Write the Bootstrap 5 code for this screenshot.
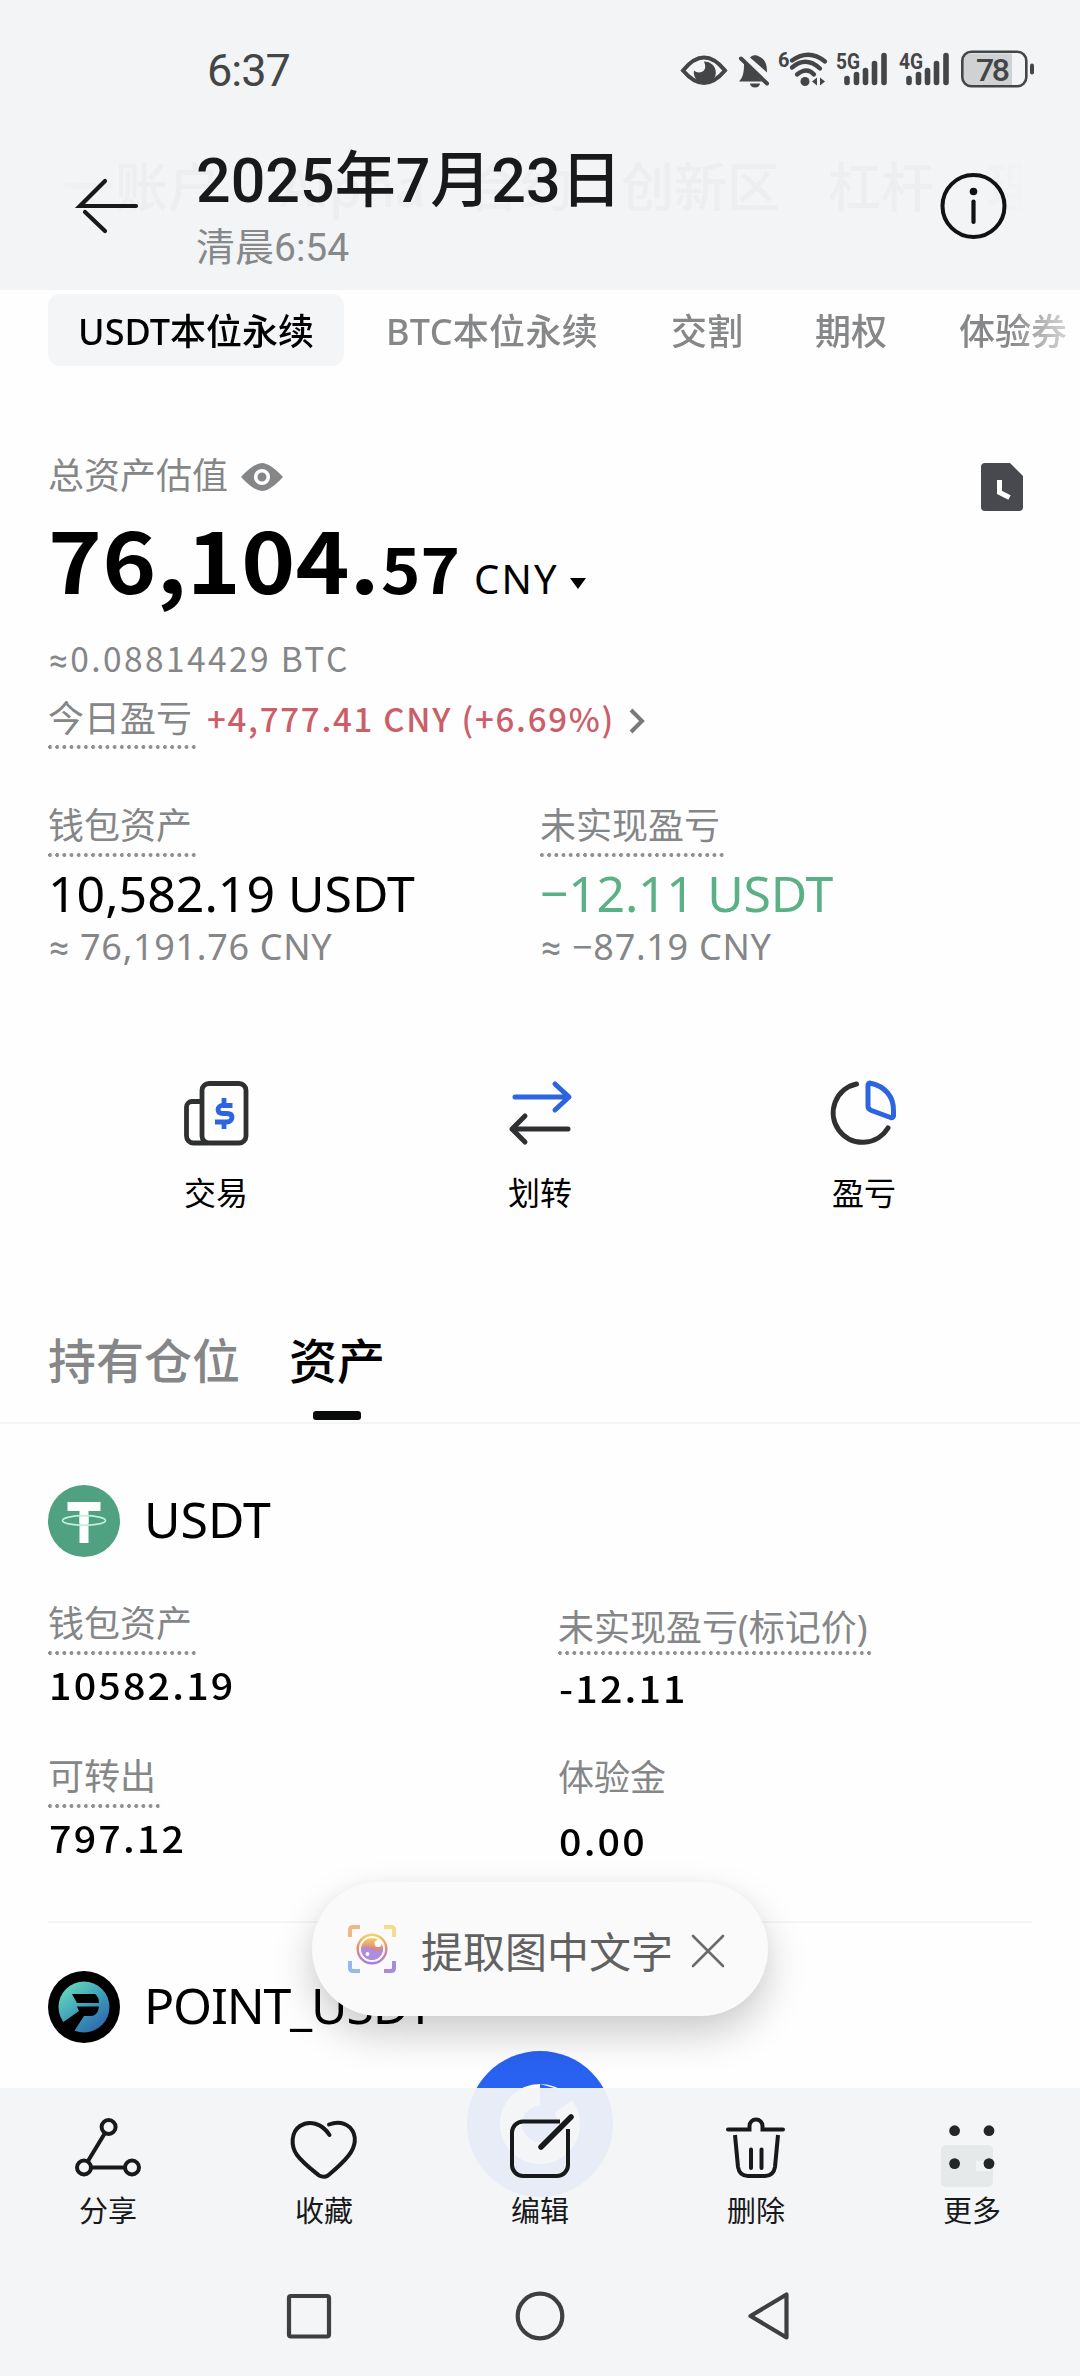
<!DOCTYPE html>
<html lang="zh-CN">
<head>
<meta charset="utf-8">
<meta name="viewport" content="width=device-width, initial-scale=1">
<title>2025年7月23日</title>
<link rel="stylesheet" href="https://cdn.jsdelivr.net/npm/bootstrap@5.3.0/dist/css/bootstrap.min.css">
<script src="https://cdn.jsdelivr.net/npm/bootstrap@5.3.0/dist/js/bootstrap.bundle.min.js"></script>
<style>
body{font-family:"Noto Sans","Noto Sans CJK SC",sans-serif;color:#000;background:#fdfdfd}
svg{display:block;flex:none;overflow:visible}
.phone{width:1080px;height:2376px;background:#fefefe}
.top-area{height:290px;background:#f3f4f6}
.status{height:134px;padding:4px 44px 0 207px;color:#444546;font-family:Roboto,sans-serif}
.clock-time{font-size:45px;letter-spacing:-1px;line-height:60px;padding-top:4px}
.title-row{height:156px;padding:0 74px 0 77px}
.page-title{font-family:Roboto,"Noto Sans CJK SC",sans-serif;font-weight:500;font-size:61px;line-height:76px;color:#17191b;letter-spacing:0;margin-top:9px}
.page-sub{font-family:Roboto,"Noto Sans CJK SC",sans-serif;font-size:39px;line-height:44px;color:#86888a;margin-top:7px}
.ghost{left:62px;top:150px;width:960px;height:74px;font-size:53px;line-height:74px;font-weight:500;color:#edeef0;white-space:nowrap;-webkit-mask-image:linear-gradient(90deg,rgba(0,0,0,.4),#000 8%,#000 92%,rgba(0,0,0,.2))}
.ghost span{flex:none}
.market-tabs{height:76px;padding:4px 0 0 48px;font-size:36px;font-weight:500;line-height:75px;color:#868789;white-space:nowrap;-webkit-mask-image:linear-gradient(90deg,#000 1010px,rgba(0,0,0,.35) 1066px)}
.market-tabs .on{width:296px;height:72px;border-radius:12px;background:#f4f5f7;color:#000}
.pad{padding-left:48px;padding-right:48px}
.soft{color:#858688}
.lab{font-size:36px;line-height:40px;color:#858688}
.dots{height:51px;display:inline-block;background:radial-gradient(circle at 2px 2px,#8f9092 1.7px,transparent 2.2px) 0 100%/7.2px 4px repeat-x}
.num{font-family:"Noto Sans CJK SC",sans-serif}
.aeq{font-family:Roboto,"Liberation Sans",sans-serif;line-height:1}
.amount{height:120px;line-height:120px;padding-top:2px}
.amount .big{font-weight:700;font-size:84px;transform:scaleX(1.09);transform-origin:0 50%;flex:none;width:333px;letter-spacing:.3px}
.amount .dec{font-weight:700;font-size:62px;transform:scaleX(1.08);transform-origin:0 50%;flex:none;width:93px}
.unit{font-size:40px;letter-spacing:2.2px}
.btc{font-size:33.5px;line-height:40px;height:40px;letter-spacing:2.4px;padding-left:1px}
.gain{font-size:33px;font-weight:500;line-height:40px;letter-spacing:1.75px;color:#cb5e69;margin-left:10px;margin-top:-1px;white-space:nowrap}
.val{font-size:50px;line-height:52px;white-space:nowrap;letter-spacing:0}
.approx{font-size:36px;line-height:40px;height:40px;margin-top:8px;letter-spacing:.7px;padding-left:1px}
.act{font-size:32px;line-height:40px;margin-top:27px}
.tabs2{font-size:48px;line-height:60px;font-weight:500}
.bar-mark{width:48px;height:9px;border-radius:3px;background:#090a0a;margin-top:20px}
.hair{height:2px;background:#f5f5f6}
.coin{height:72px}
.coin span{font-size:50px;line-height:69px;margin-left:24px}
.dval{font-size:36.5px;font-weight:500;line-height:40px;letter-spacing:2px;transform:scaleX(1.08);transform-origin:0 50%;padding-left:1px}
.half{width:510px;height:104px;flex:none}
.toast-pill{left:312px;top:1882px;width:456px;height:134px;border-radius:67px;background:#fafafa;box-shadow:0 18px 40px rgba(0,0,0,.2),0 0 14px rgba(0,0,0,.025);padding-left:36px;z-index:3;color:#616161;font-size:42px}
.fab{left:467px;top:2051px;z-index:2}
.dock{left:0;top:2088px;width:1080px;height:288px;z-index:4;background:rgba(243,244,246,.945);font-size:29px;color:#17191a}
.dock .cell{width:216px;padding-top:26px}
.dock .cell span{line-height:36px;margin-top:13px}
</style>
</head>
<body>
<div class="phone position-relative overflow-hidden mx-auto">
  <header class="top-area position-relative">
    <div class="ghost position-absolute d-flex"><span style="width:53px">一</span><span style="width:165px">账户</span><span style="width:187px">Alpha</span><span style="width:154px">合约</span><span style="width:207px">创新区</span><span style="width:158px">杠杆</span><span>理</span></div>
    <div class="status d-flex justify-content-between align-items-center">
      <span class="clock-time">6:37</span>
      <svg width="360" height="60" viewBox="675 38.500 360 60" fill="#444546">
        <path d="M682 70Q703 44 724 70Q703 95 682 70Z" fill="none" stroke="#444546" stroke-width="4"/>
        <path d="M703 61a11 11 0 1 1-10 9c4 4 15 2 10-9Z"/>
        <path d="M749 57a6 5 0 0 1 9-1c7 3 8 9 8 16ZM743 62l18 19H738c5-5 5-12 5-19Z"/><path d="M740 58l26 25" stroke="#444546" stroke-width="4" stroke-linecap="round"/><path d="M749 83h10a5 4 0 0 1-10 0Z"/>
        <text x="777" y="66" font-size="20" font-weight="700" font-family="Roboto">6</text>
        <g fill="none" stroke="#444546" stroke-width="4.3" stroke-linecap="round"><path d="M791 60q17-12 33 1M791 67q14-12 28 1M796 74q10-8 17 0"/></g>
        <circle cx="804" cy="81" r="4.5"/><path d="M811 81l5-4v8ZM824 81l-5-4v8Z"/>
        <text x="835" y="68" font-size="22" font-weight="700" font-family="Roboto" textLength="24" lengthAdjust="spacingAndGlyphs">5G</text>
        <text x="898" y="68" font-size="22" font-weight="700" font-family="Roboto" textLength="24" lengthAdjust="spacingAndGlyphs">4G</text>
        <g stroke="#444546" stroke-width="5.6" stroke-linecap="round"><path d="M846 78v4M855.500 74v8M864.500 70v12M873.500 63v19M883 55v27M908 78v4M917.500 74v8M926.500 70v12M935.500 63v19M945 55v27"/></g>
        <path d="M970 53h41v32h-41a8 8 0 0 1-8-8V61a8 8 0 0 1 8-8Z" fill="#d0d1d2"/>
        <rect x="961.300" y="51.300" width="64" height="34.500" rx="9" fill="none" stroke="#444546" stroke-width="2.600"/>
        <rect x="1029" y="63" width="4" height="11" rx="2"/>
        <text x="975" y="80" font-size="32" font-weight="500" font-family="Roboto" textLength="34">78</text>
      </svg>
    </div>
    <div class="title-row d-flex position-relative">
      <svg width="62" height="144" viewBox="77 134 62 144" fill="none" stroke="#17191b" stroke-width="4.200" stroke-linecap="round"><path d="M136 206H80L105 181M85 212l20 19"/></svg>
      <div class="flex-grow-1" style="margin-left:57px">
        <div class="page-title">2025年7月23日</div>
        <div class="page-sub">清晨6:54</div>
      </div>
      <svg width="66" height="144" viewBox="938.500 134 66 144"><circle cx="972" cy="206" r="31" fill="none" stroke="#101214" stroke-width="4"/><circle cx="972" cy="191.500" r="3.800" fill="#101214"/><path d="M972 201.500v20.500" stroke="#101214" stroke-width="4.200" stroke-linecap="round"/></svg>
    </div>
  </header>

  <nav class="market-tabs d-flex">
    <div class="on text-center">USDT本位永续</div>
    <div style="margin-left:42px;width:285px;letter-spacing:.3px">BTC本位永续</div>
    <div style="width:144px">交割</div>
    <div style="width:144px">期权</div>
    <div>体验券</div>
  </nav>

  <section class="pad">
    <div class="d-flex justify-content-between align-items-start" style="margin-top:90px;height:40px">
      <div class="lab d-flex align-items-center">总资产估值
        <svg style="margin:1px 0 0 13px" width="42" height="30" viewBox="0 0 42 30"><path d="M0 15Q13 1 21 1T42 15Q29 29 21 29T0 15Z" fill="#858688"/><circle cx="21" cy="15" r="6.300" fill="none" stroke="#fff" stroke-width="3.600"/></svg>
      </div>
      <svg style="margin:7px 9px 0 0" width="42" height="48" viewBox="0 0 42 48"><path d="M4 0H29L42 13V44a4 4 0 0 1-4 4H4a4 4 0 0 1-4-4V4a4 4 0 0 1 4-4Z" fill="#47494e"/><path d="M18.500 17V29.500L28.500 34.500" fill="none" stroke="#fff" stroke-width="5"/></svg>
    </div>
    <div class="amount d-flex align-items-baseline">
      <span class="num big">76,104.</span><span class="num dec">57</span><span class="unit">CNY</span>
      <svg class="mb-1" style="margin-left:10px" width="18" height="16" viewBox="0 0 18 16"><path d="M1 0H17L9 11Z"/></svg>
    </div>
    <div class="num btc soft" style="margin-top:22px"><span class="aeq">≈</span>0.08814429 BTC</div>
    <div class="d-flex align-items-start" style="margin-top:21px;height:50px">
      <span class="lab dots" style="height:50px;width:149px">今日盈亏</span>
      <span class="num gain">+4,777.41 CNY (+6.69%)</span>
      <svg style="margin:9px 0 0 14px" width="16" height="26" viewBox="0 0 16 26" fill="none" stroke="#77797b" stroke-width="4"><path d="M2 2L13 13L2 24"/></svg>
    </div>
    <div class="d-flex" style="margin-top:57px">
      <div style="width:492px">
        <div class="lab dots d-block" style="width:149px">钱包资产</div>
        <div class="val" style="margin-top:10px">10,582.19 USDT</div>
        <div class="approx soft"><span class="aeq">≈</span> 76,191.76 CNY</div>
      </div>
      <div>
        <div class="lab dots d-block" style="width:184px">未实现盈亏</div>
        <div class="val" style="margin-top:10px;color:#5cb085;letter-spacing:-.3px">−12.11 USDT</div>
        <div class="approx soft"><span class="aeq">≈</span> −87.19 CNY</div>
      </div>
    </div>
  </section>

  <section class="d-flex" style="margin-top:113px;padding:0 54px">
    <div class="col d-flex flex-column align-items-center">
      <svg width="66" height="66" viewBox="183 1080 66 66" fill="none" stroke="#2f3031" stroke-width="4.800"><rect x="202" y="1083.500" width="44" height="59.500" rx="7"/><path d="M202 1101.500h-10a5.500 5.500 0 0 0-5.500 5.500v29a7 7 0 0 0 7 7h14"/><path d="M232.500 1105.500h-9.500a4.500 4 0 0 0-5 4c0 3 2 4 5 4h4c4 0 5 2 5 4s-2 4.500-5 4.500h-12M224 1098v7M224 1122v7" stroke="#2d64e0"/></svg>
      <span class="act">交易</span>
    </div>
    <div class="col d-flex flex-column align-items-center">
      <svg width="66" height="66" viewBox="507 1080 66 66" fill="none" stroke-width="5" stroke-linecap="round" stroke-linejoin="round"><path d="M515 1097H568M555 1084l14 13-14 13" stroke="#2d64e0"/><path d="M568 1129H512M525 1116l-13 13 13 13" stroke="#2f3031"/></svg>
      <span class="act">划转</span>
    </div>
    <div class="col d-flex flex-column align-items-center">
      <svg width="66" height="66" viewBox="830 1081 66 66" fill="none" stroke-width="5" stroke-linecap="round" stroke-linejoin="round"><path d="M855.500 1085A29.500 29.500 0 1 0 887 1129" stroke="#2f3031"/><path d="M867 1086.500a2 2 0 0 1 2.500-2.300C884 1087 893 1098 892.500 1112v5q-.6 2.200-3 1.500l-19-7q-3.500-1.500-3.500-4Z" stroke="#2d64e0"/></svg>
      <span class="act">盈亏</span>
    </div>
  </section>

  <section class="pad tabs2 d-flex" style="margin-top:118px;height:91px">
    <div class="soft" style="width:241px">持有仓位</div>
    <div class="d-flex flex-column align-items-center">资产<div class="bar-mark"></div></div>
  </section>
  <div class="hair"></div>

  <section class="pad">
    <div class="coin d-flex" style="margin-top:61px">
      <svg width="72" height="72" viewBox="0 0 72 72"><circle cx="36" cy="36" r="36" fill="#50a082"/><path d="M19.500 17H52.500V26H40.500V58H31.500V26H19.500Z" fill="#fff"/><ellipse cx="36" cy="35.500" rx="21.500" ry="4.800" fill="none" stroke="#bfeedd" stroke-width="1.700"/><path d="M31.500 32h9v6h-9Z" fill="#fff"/></svg>
      <span>USDT</span>
    </div>
    <div class="d-flex" style="margin-top:47px">
      <div class="half"><div class="lab dots d-block" style="width:149px">钱包资产</div><div class="dval num" style="margin-top:10px">10582.19</div></div>
      <div class="half" style="padding-top:4px"><div class="lab dots d-block" style="height:47px;width:315px">未实现盈亏(标记价)</div><div class="dval num" style="margin-top:13px">-12.11</div></div>
    </div>
    <div class="d-flex" style="margin-top:49px">
      <div class="half"><div class="lab dots d-block" style="width:113px">可转出</div><div class="dval num" style="margin-top:10px">797.12</div></div>
      <div class="half" style="padding-top:1px"><div class="lab">体验金</div><div class="dval num" style="margin-top:23px">0.00</div></div>
    </div>
    <div class="hair" style="margin-top:60px"></div>
    <div class="coin d-flex" style="margin-top:48px">
      <svg width="72" height="72" viewBox="0 0 72 72"><defs><linearGradient id="pg" x1="0" y1="0" x2=".8" y2="1"><stop offset=".1" stop-color="#66d9bd"/><stop offset=".55" stop-color="#3f9fb8"/><stop offset="1" stop-color="#2e64ac"/></linearGradient></defs><circle cx="36" cy="36" r="36"/><circle cx="36" cy="36" r="25.500" fill="url(#pg)"/><path d="M24 23H47Q51 26 51 32H29ZM29 35.500H51Q50 44 44 45H36L25 62L14 52L31 40Z"/></svg>
      <span style="letter-spacing:-1.2px">POINT_USDT</span>
    </div>
  </section>

  <svg class="fab position-absolute" width="146" height="146" viewBox="0 0 146 146"><circle cx="73" cy="73" r="73" fill="#2962f0"/><circle cx="73" cy="73" r="29" fill="none" stroke="#fff" stroke-width="22"/><path d="M73 73V33L112 44Z" fill="#2962f0"/></svg>

  <div class="toast-pill position-absolute d-flex align-items-center">
    <svg width="48" height="48" viewBox="0 0 48 48" fill="none"><defs><linearGradient id="lg" x1="0" y1="0" x2="0" y2="1"><stop stop-color="#f0d36b"/><stop offset=".45" stop-color="#e58a70"/><stop offset="1" stop-color="#a77fe4"/></linearGradient></defs>
      <g stroke-width="4"><path d="M2 12V5q0-3 3-3h7" stroke="#efb784"/><path d="M36 2h7q3 0 3 3v7" stroke="#f3dc8b"/><path d="M2 36v7q0 3 3 3h7" stroke="#95b9ea"/><path d="M36 46h7q3 0 3-3v-7" stroke="#a58be2"/></g>
      <circle cx="24" cy="24" r="14.300" stroke="url(#lg)" stroke-width="2.400"/><circle cx="24" cy="24" r="11" fill="url(#lg)"/><path d="M13 24q5-5 11 0t11-1a11 11 0 0 1-22 1Z" fill="#ae8ce3"/><circle cx="30" cy="18.500" r="3.500" fill="#fff"/><circle cx="19.500" cy="29" r="1.900" fill="#fff"/></svg>
    <span style="margin:5px 0 0 25px;width:271px">提取图中文字</span>
    <svg style="margin-top:3px" width="32" height="32" viewBox="0 0 32 32" stroke="#6b6b6b" stroke-width="2.600" stroke-linecap="round"><path d="M1 1L31 31M31 1L1 31"/></svg>
  </div>

  <footer class="dock position-absolute">
    <div class="d-flex" style="height:172px" >
      <div class="cell d-flex flex-column align-items-center">
        <svg width="68" height="66" viewBox="74 2114 68 66" fill="none" stroke="#17191a" stroke-width="4"><circle cx="108.600" cy="2127" r="7"/><circle cx="84" cy="2167.500" r="7"/><circle cx="132" cy="2167.500" r="7"/><path d="M105 2133l-17 28M91 2167.500h34"/></svg><span>分享</span>
      </div>
      <div class="cell d-flex flex-column align-items-center">
        <svg width="68" height="66" viewBox="290 2114 68 66" fill="none" stroke="#17191a" stroke-width="4" stroke-linecap="round"><path d="M329.500 2135C322 2123 309 2120 300 2126S290.500 2146 297 2155C303 2163 311 2169 319 2175.500Q324 2178 328 2175.500C337 2168 343 2163 349 2155S358 2136 350 2127.500Q341 2120 329 2124.500"/></svg><span>收藏</span>
      </div>
      <div class="cell d-flex flex-column align-items-center">
        <svg width="68" height="66" viewBox="506 2114 68 66" fill="none" stroke="#17191a" stroke-width="4"><path d="M560 2121.500H523a11 11 0 0 0-11 11V2165a11 11 0 0 0 11 11H557a11 11 0 0 0 11-11V2129"/><path d="M571 2117L541 2147" stroke-width="5.500" stroke-linecap="round"/></svg><span>编辑</span>
      </div>
      <div class="cell d-flex flex-column align-items-center">
        <svg width="68" height="66" viewBox="722 2114 68 66" fill="none" stroke="#17191a" stroke-width="4" stroke-linecap="round"><path d="M728 2129.500H749.500V2126a6.500 6.500 0 0 1 13 0v3.500H783"/><path d="M735 2135l3 32q1.500 9 10 9h17q8.500 0 10-9l3-32" stroke-linecap="butt"/><path d="M751 2149.500v18.500M761.500 2149.500v18.500"/></svg><span>删除</span>
      </div>
      <div class="cell d-flex flex-column align-items-center">
        <svg width="68" height="66" viewBox="938 2114 68 66"><rect x="941" y="2145" width="52" height="42" rx="5" fill="#e6e9ea"/><path d="M976 2161h14v10h-14Z" fill="#f1f3f4"/><g fill="#242628"><circle cx="954.600" cy="2130.700" r="5.400"/><circle cx="989" cy="2130.700" r="5.400"/><circle cx="954.600" cy="2163.600" r="5.400"/><circle cx="989" cy="2163.600" r="5.400"/></g></svg><span>更多</span>
      </div>
    </div>
    <div class="d-flex" style="margin-top:26px;padding-left:285px">
      <svg width="48" height="60" viewBox="285 2286 48 60" fill="none" stroke="#3d3f41" stroke-width="4.200"><rect x="289" y="2296" width="40" height="40.500" rx="2"/></svg>
      <svg style="margin-left:181px" width="52" height="60" viewBox="514 2286 52 60" fill="none" stroke="#3d3f41" stroke-width="4.200"><circle cx="540" cy="2316" r="22.300"/></svg>
      <svg style="margin-left:180px" width="48" height="60" viewBox="746 2286 48 60" fill="none" stroke="#3d3f41" stroke-width="4.200" stroke-linejoin="round"><path d="M750.500 2316L786.500 2294.500V2337.500Z"/></svg>
    </div>
  </footer>
</div>
</body>
</html>
